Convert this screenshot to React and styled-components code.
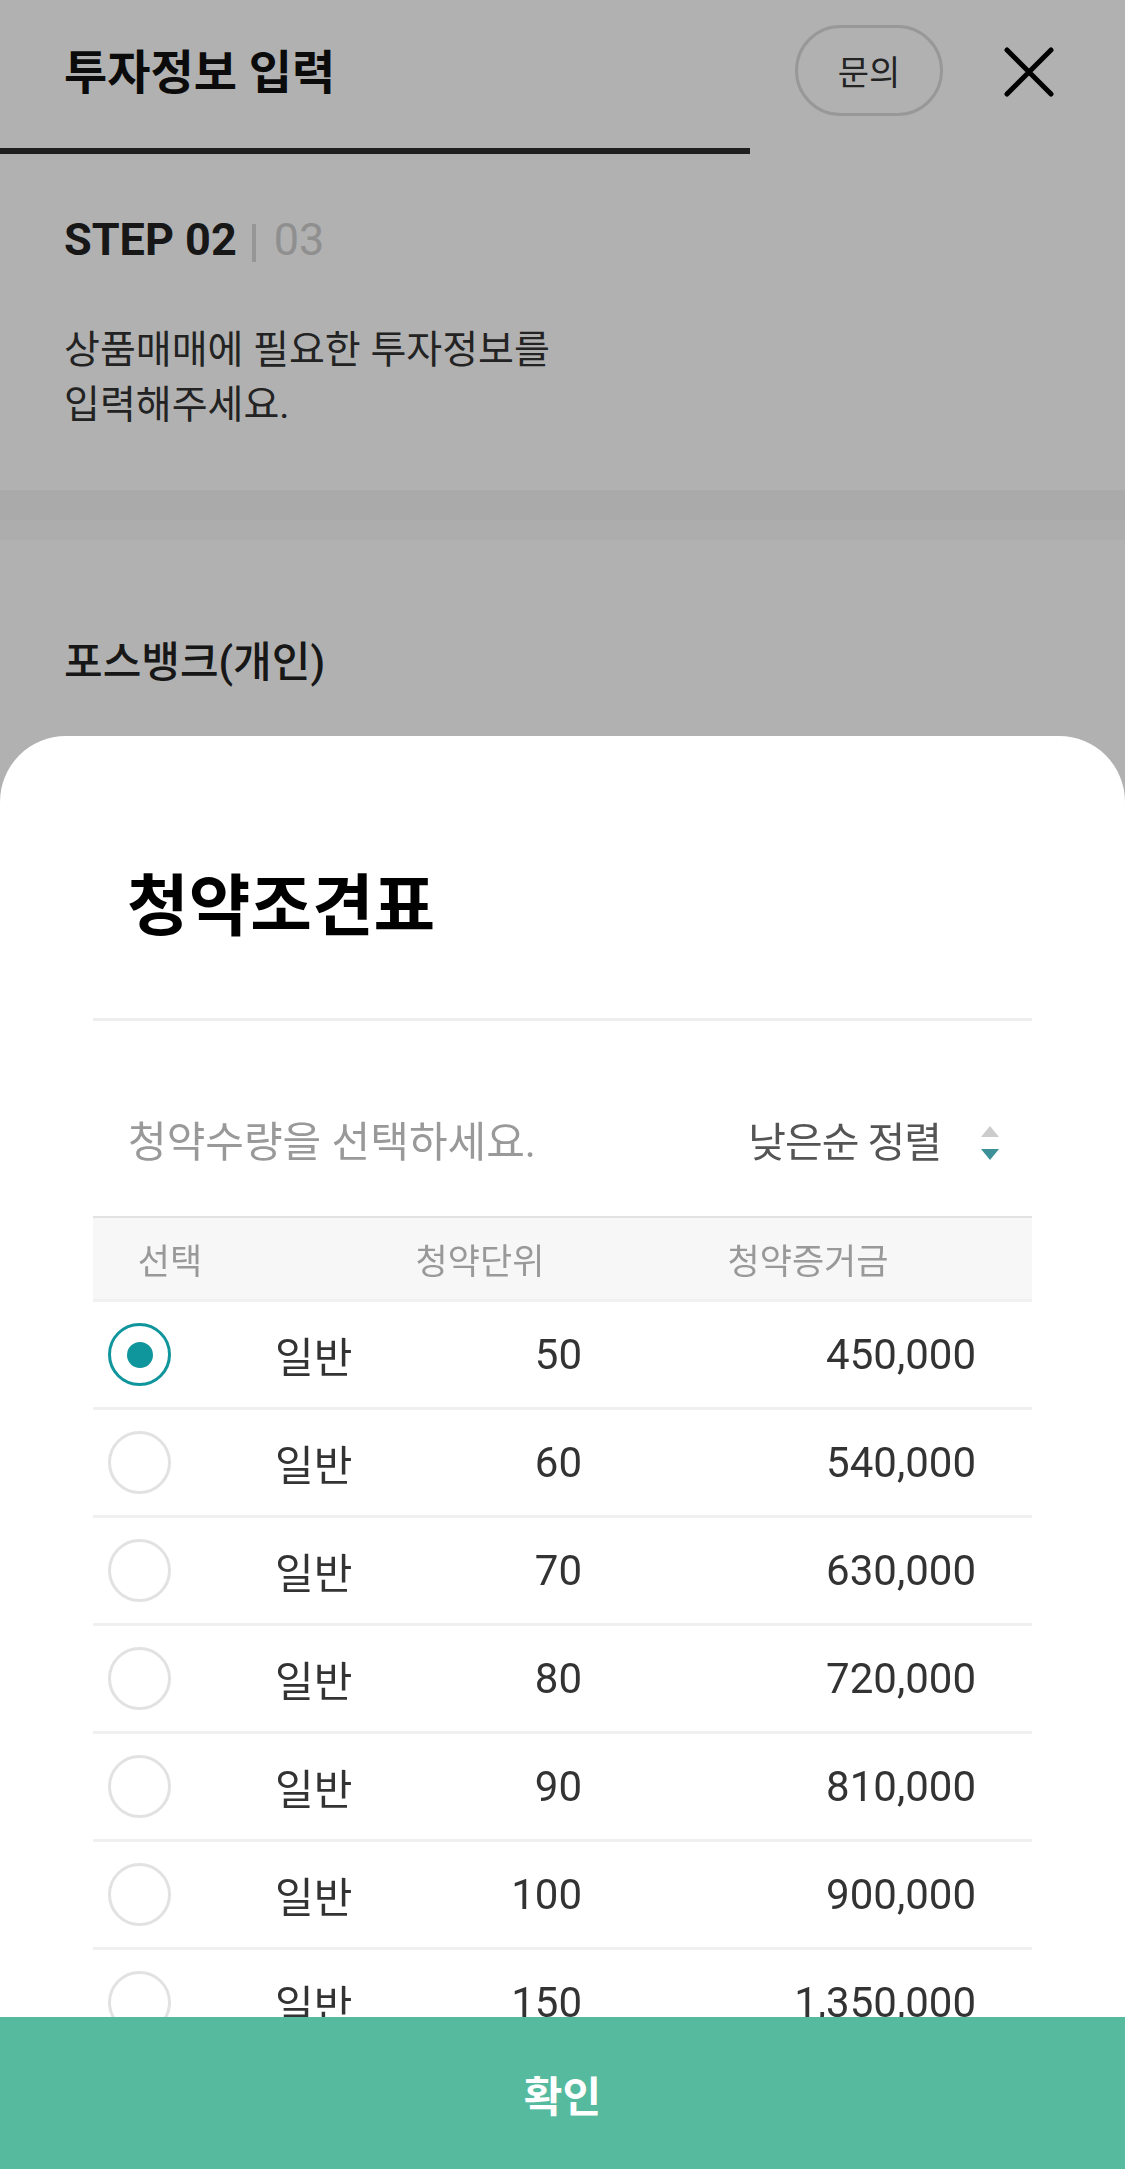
import styled, { createGlobalStyle } from "styled-components"

const GlobalStyle = createGlobalStyle`
    html, body {
        margin: 0;
        padding: 0;
        background: #fff;
    }
    body {
        font-family: Roboto, "Noto Sans CJK KR", sans-serif;
        -webkit-font-smoothing: antialiased;
    }
    * {
        box-sizing: border-box;
    }
`

const Page = styled.div`
    width: 1125px;
    min-height: 2169px;
    background: #fff;
`

const Header = styled.header`
    display: flex;
    align-items: center;
    height: 148px;
    padding: 0 71px 12px 64px;
`

const HeaderTitle = styled.h1`
    flex: 1;
    margin: 0;
    font-size: 47px;
    font-weight: 700;
    color: #111;
`

const AskButton = styled.button`
    width: 148px;
    height: 91px;
    border: 3px solid #dcdcdc;
    border-radius: 46px;
    background: #fff;
    font-family: inherit;
    font-size: 34px;
    color: #333;
    margin: 4px 61px 0 0;
    padding: 0;
`

const CloseIcon = styled.svg`
    width: 50px;
    height: 50px;
    display: block;
    margin-top: 8px;
`

const Progress = styled.div`
    height: 6px;
    width: ${(p) => p.$ratio * 100}%;
    background: #2e2e2e;
`

const StepSection = styled.section`
    padding: 57px 64px 57px 64px;
`

const StepLine = styled.div`
    font-size: 45px;
    line-height: 57.6px;
    font-weight: 700;
    color: #222;
    display: flex;
    align-items: center;
`

const StepDivider = styled.span`
    display: inline-block;
    width: 4px;
    height: 38px;
    background: #d8d8d8;
    margin: 6px 18px 0 15px;
`

const StepTotal = styled.span`
    font-weight: 400;
    color: #cfcfcf;
`

const Guide = styled.p`
    margin: 54px 0 0 0;
    font-size: 39px;
    line-height: 55px;
    color: #333;
`

const Band = styled.div`
    height: 50px;
    background: linear-gradient(#f5f5f5 0, #f5f5f5 60%, #fafafa 60%, #fafafa 100%);
`

const Company = styled.div`
    padding: 95px 64px 0 64px;
    font-size: 42px;
    line-height: 56px;
    font-weight: 500;
    color: #222;
`

const Dim = styled.div`
    position: fixed;
    inset: 0;
    background: rgba(0, 0, 0, 0.306);
    z-index: 1;
`

const Sheet = styled.div`
    position: fixed;
    left: 0;
    right: 0;
    bottom: 0;
    height: 1433px;
    background: #fff;
    border-radius: 66px 66px 0 0;
    z-index: 2;
    display: flex;
    flex-direction: column;
    overflow: hidden;
`

const SheetTitle = styled.h2`
    margin: 0;
    padding: 126px 0 66px 127px;
    font-size: 67px;
    line-height: 90px;
    font-weight: 700;
    color: #000;
`

const Divider = styled.div`
    margin: 0 93px;
    height: 3px;
    background: #eee;
`

const SortRow = styled.div`
    display: flex;
    align-items: center;
    justify-content: space-between;
    margin: 94px 93px 45px 93px;
    padding: 0 33px 0 35px;
    font-size: 41px;
    line-height: 56px;
`

const Placeholder = styled.span`
    color: #999;
    font-size: 42px;
`

const SortButton = styled.div`
    display: flex;
    align-items: center;
    gap: 40px;
    color: #555;
    letter-spacing: -1px;
`

const Arrows = styled.div`
    display: flex;
    flex-direction: column;
    gap: 12px;
`

const Triangle = styled.span`
    width: 0;
    height: 0;
    border-left: 9px solid transparent;
    border-right: 9px solid transparent;
    ${(p) =>
        p.$down
            ? `border-top: 11px solid ${p.$active ? "#3d9097" : "#ccc"};`
            : `border-bottom: 11px solid ${p.$active ? "#3d9097" : "#ccc"};`}
`

const TableHead = styled.div`
    margin: 0 93px;
    height: 83px;
    border-top: 2px solid #e2e2e2;
    background: #f7f7f7;
    display: grid;
    grid-template-columns: 154px 466px 190px 1fr;
    justify-items: center;
    align-items: center;
    font-size: 35px;
    color: #999;
`

const List = styled.div`
    flex: 1;
    margin: 0 93px;
    overflow: hidden;
`

const Row = styled.div`
    display: grid;
    grid-template-columns: 167px 165px 142px 394px;
    align-items: center;
    height: 108px;
    padding: 0 56px 0 15px;
    border-top: 3px solid #f0f0f0;
    font-size: 42px;
    color: #333;
`

const Radio = styled.span`
    width: 63px;
    height: 63px;
    border-radius: 50%;
    border: 3px solid ${(p) => (p.$checked ? "#0f959c" : "#e2e2e2")};
    display: flex;
    align-items: center;
    justify-content: center;
`

const Dot = styled.span`
    width: 26px;
    height: 26px;
    border-radius: 50%;
    background: #0f959c;
`

const Cell = styled.span`
    text-align: ${(p) => (p.$right ? "right" : "left")};
`

const Confirm = styled.button`
    flex-shrink: 0;
    height: 152px;
    width: 100%;
    border: 0;
    background: #56ba9e;
    color: #fff;
    font-family: inherit;
    font-size: 42px;
    font-weight: 700;
`

const rows = [
    { unit: 50, amount: "450,000" },
    { unit: 60, amount: "540,000" },
    { unit: 70, amount: "630,000" },
    { unit: 80, amount: "720,000" },
    { unit: 90, amount: "810,000" },
    { unit: 100, amount: "900,000" },
    { unit: 150, amount: "1,350,000" },
    { unit: 200, amount: "1,800,000" },
]

const App = () => {
    return (
        <>
            <GlobalStyle />
            <Page>
                <Header>
                    <HeaderTitle>투자정보 입력</HeaderTitle>
                    <AskButton>문의</AskButton>
                    <CloseIcon viewBox="0 0 50 50">
                        <path d="M3 3 L47 47 M47 3 L3 47" stroke="#000" strokeWidth="5" strokeLinecap="round" fill="none" />
                    </CloseIcon>
                </Header>
                <Progress $ratio={2 / 3} />
                <StepSection>
                    <StepLine>
                        STEP 02<StepDivider /><StepTotal>03</StepTotal>
                    </StepLine>
                    <Guide>
                        상품매매에 필요한 투자정보를
                        <br />
                        입력해주세요.
                    </Guide>
                </StepSection>
                <Band />
                <Company>포스뱅크(개인)</Company>
            </Page>
            <Dim />
            <Sheet>
                <SheetTitle>청약조견표</SheetTitle>
                <Divider />
                <SortRow>
                    <Placeholder>청약수량을 선택하세요.</Placeholder>
                    <SortButton>
                        낮은순 정렬
                        <Arrows>
                            <Triangle />
                            <Triangle $down $active />
                        </Arrows>
                    </SortButton>
                </SortRow>
                <TableHead>
                    <span>선택</span>
                    <span>청약단위</span>
                    <span>청약증거금</span>
                </TableHead>
                <List>
                    {rows.map((r, i) => (
                        <Row key={r.unit}>
                            <Radio $checked={i === 0}>{i === 0 && <Dot />}</Radio>
                            <Cell>일반</Cell>
                            <Cell $right>{r.unit}</Cell>
                            <Cell $right>{r.amount}</Cell>
                        </Row>
                    ))}
                </List>
                <Confirm>확인</Confirm>
            </Sheet>
        </>
    )
}

export default App
